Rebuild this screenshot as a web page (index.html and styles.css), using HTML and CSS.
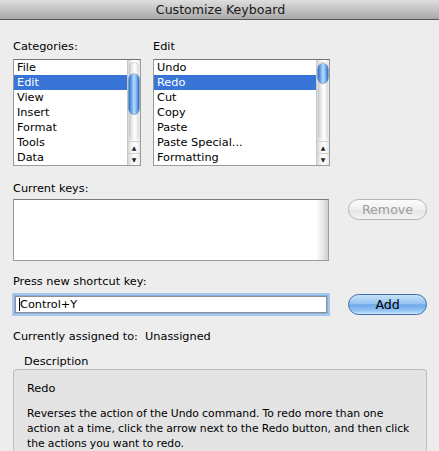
FILE: index.html
```html
<!DOCTYPE html>
<html>
<head>
<meta charset="utf-8">
<link rel="stylesheet" href="styles.css">
</head>
<body>
<div class="window">
  <div class="titlebar">Customize Keyboard</div>
  <div class="content">
    <div class="lists">
      <div class="col col-cat">
        <div class="label">Categories:</div>
        <div class="listbox">
          <ul class="items">
            <li>File</li>
            <li class="sel">Edit</li>
            <li>View</li>
            <li>Insert</li>
            <li>Format</li>
            <li>Tools</li>
            <li>Data</li>
          </ul>
          <div class="scrollbar">
            <div class="track"><div class="thumb thumb-cat"></div></div>
            <div class="arrow up">▲</div>
            <div class="arrow down">▼</div>
          </div>
        </div>
      </div>
      <div class="col col-cmd">
        <div class="label">Edit</div>
        <div class="listbox">
          <ul class="items">
            <li>Undo</li>
            <li class="sel">Redo</li>
            <li>Cut</li>
            <li>Copy</li>
            <li>Paste</li>
            <li>Paste Special...</li>
            <li>Formatting</li>
          </ul>
          <div class="scrollbar">
            <div class="track"><div class="thumb thumb-cmd"></div></div>
            <div class="arrow up">▲</div>
            <div class="arrow down">▼</div>
          </div>
        </div>
      </div>
    </div>

    <div class="label label-keys">Current keys:</div>
    <div class="row">
      <div class="keysbox"><div class="keys-shade"></div></div>
      <button class="btn btn-remove">Remove</button>
    </div>

    <div class="label label-press">Press new shortcut key:</div>
    <div class="row row-press">
      <div class="field"><span class="caret"></span>Control+Y</div>
      <button class="btn btn-add">Add</button>
    </div>

    <div class="assigned">Currently assigned to:&nbsp; Unassigned</div>

    <div class="desc-label">Description</div>
    <div class="desc">
      <p class="desc-title">Redo</p>
      <p class="desc-text">Reverses the action of the Undo command. To redo more than one<br>action at a time, click the arrow next to the Redo button, and then click<br>the actions you want to redo.</p>
    </div>
  </div>
</div>
</body>
</html>
```

FILE: styles.css
```css
html, body {
  margin: 0;
  padding: 0;
  background: #ededed;
  overflow: hidden;
}
body {
  font-family: "DejaVu Sans", "Lucida Grande", sans-serif;
  font-size: 11.3px;
  color: #000;
  width: 439px;
  height: 451px;
}
.window {
  width: 439px;
  height: 451px;
  overflow: hidden;
}
.titlebar {
  height: 19px;
  line-height: 19px;
  text-align: center;
  font-size: 12.6px;
  color: #1a1a1a;
  background: linear-gradient(to bottom, #dedede 0%, #c4c4c4 50%, #a9a9a9 100%);
  border-bottom: 1px solid #555;
  padding-left: 2px;
}
.content {
  padding: 0 12px 0 13px;
}
.label {
  line-height: 14px;
  height: 14px;
}
.lists {
  display: flex;
  gap: 12px;
  margin-top: 20px;
}
.lists .label {
  margin-bottom: 5px;
}
.col-cat { width: 128px; }
.col-cmd { width: 177px; }
.listbox {
  display: flex;
  height: 105px;
  background: #fff;
  border: 1px solid #9b9b9b;
  border-top-color: #727272;
}
.items {
  list-style: none;
  margin: 0;
  padding: 0;
  flex: 1;
}
.items li {
  height: 15px;
  line-height: 15px;
  padding-left: 3px;
  white-space: nowrap;
}
.items li.sel {
  background: #3875d7;
  color: #fff;
}
.scrollbar {
  width: 12px;
  display: flex;
  flex-direction: column;
  border-left: 1px solid #c8c8c8;
  background: linear-gradient(to right, #d6d6d6 0%, #f6f6f6 35%, #ffffff 60%, #e9e9e9 100%);
}
.track {
  flex: 1;
  margin: 2px 1px 1px 1px;
  border-radius: 6px;
  background: linear-gradient(to right, #c9c9c9 0%, #f3f3f3 40%, #ffffff 60%, #dddddd 100%);
  box-shadow: inset 0 1px 1px rgba(0,0,0,0.12);
}
.thumb {
  width: 10px;
  border-radius: 5px;
  background: linear-gradient(to right, #2f6fc8 0%, #6aa6ec 25%, #b9dcfb 50%, #79b3f0 75%, #2d68c0 100%);
  box-shadow: 0 0 0 0.5px #2b5ea9;
}
.thumb-cat {
  margin-top: 12px;
  height: 40px;
}
.thumb-cmd {
  margin-top: 2px;
  height: 19px;
}
.arrow {
  height: 11px;
  line-height: 11px;
  font-size: 6px;
  text-align: center;
  color: #222;
  border-top: 1px solid #d0d0d0;
}
.label-keys {
  margin-top: 16px;
  margin-bottom: 3px;
}
.row {
  display: flex;
  align-items: flex-start;
}
.keysbox {
  width: 314px;
  height: 60px;
  background: #fff;
  border: 1px solid #9b9b9b;
  border-top-color: #7a7a7a;
  display: flex;
  justify-content: flex-end;
}
.keys-shade {
  width: 11px;
  background: linear-gradient(to right, #fafafa 0%, #e4e4e4 60%, #cfcfcf 100%);
}
.btn {
  font-family: inherit;
  font-size: 12.6px;
  height: 21px;
  width: 79px;
  border-radius: 11px;
  padding: 0;
  margin-left: 19px;
  line-height: 19px;
}
.btn-remove {
  color: #9c9c9c;
  border: 1px solid #b4b4b4;
  background: linear-gradient(to bottom, #fbfbfb 0%, #f0f0f0 50%, #e6e6e6 55%, #f4f4f4 100%);
}
.label-press {
  margin-top: 14px;
  margin-bottom: 5px;
}
.row-press {
  align-items: center;
}
.field {
  width: 308px;
  height: 15px;
  line-height: 15px;
  margin: 2px 0 2px 2px;
  padding-left: 3px;
  background: #fff;
  border: 1px solid #8e8e8e;
  box-shadow: 0 0 0 1px #89b3e3, 0 0 0 3px #a7c8ee;
  display: flex;
  align-items: center;
}
.caret {
  width: 1px;
  height: 13px;
  background: #000;
}
.btn-add {
  color: #000;
  margin-left: 21px;
  height: 21px;
  border: 1px solid #3f6fb0;
  background: linear-gradient(to bottom, #c7e1f8 0%, #97c4f0 45%, #6ea9e8 52%, #8ec2f3 80%, #c9e6fb 100%);
}
.assigned {
  margin-top: 15px;
  line-height: 14px;
}
.desc-label {
  margin-top: 11px;
  margin-left: 11px;
  line-height: 14px;
}
.desc {
  margin-top: 0;
  width: 399px;
  height: 70px;
  background: #e3e3e3;
  border: 1px solid #bcbcbc;
  border-bottom: none;
  border-radius: 4px 4px 0 0;
  padding: 11px 0 0 13px;
}
.desc p {
  margin: 0;
  line-height: 15px;
}
.desc-text {
  font-size: 10.8px;
  word-spacing: -0.3px;
  white-space: nowrap;
}
.desc-title {
  margin-bottom: 10px !important;
}
```
